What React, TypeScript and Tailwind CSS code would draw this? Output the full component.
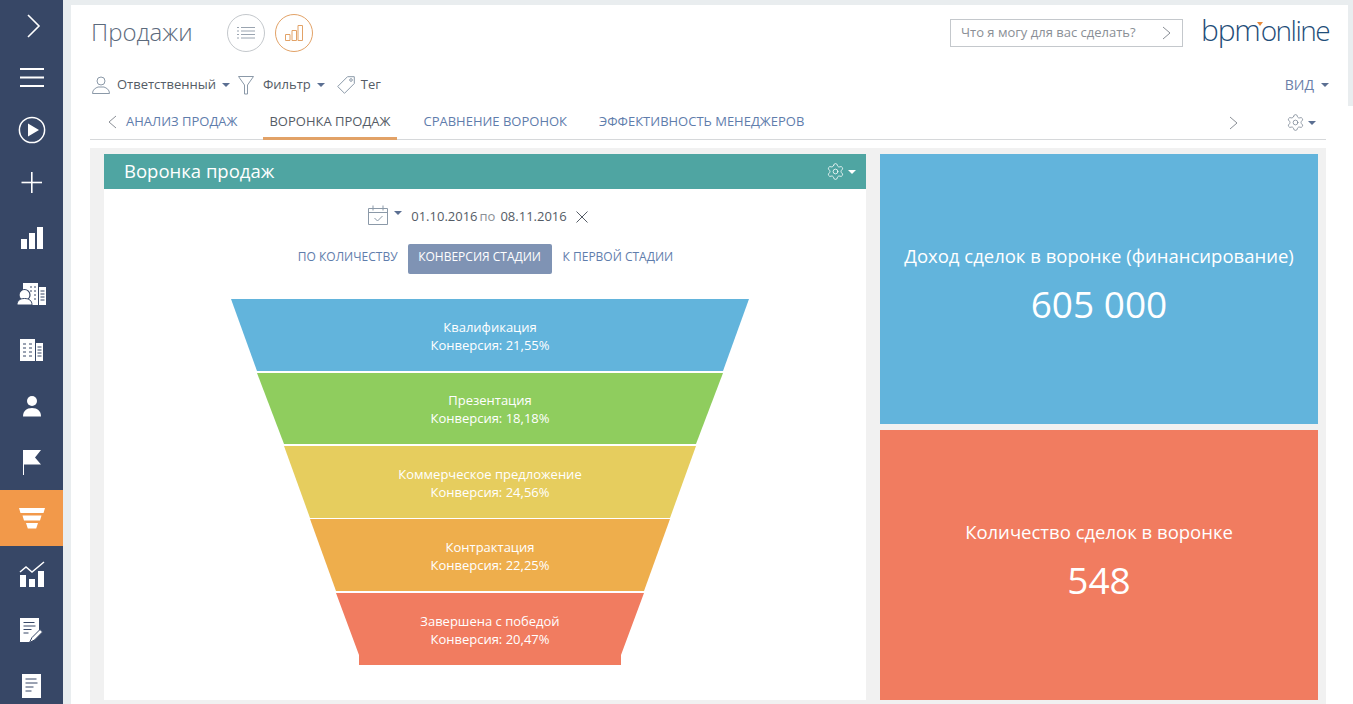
import { Settings } from 'lucide-react'

const font = { fontFamily: '"Open Sans", sans-serif' }

function Caret({ className = 'border-t-[#5b6f92]' }: { className?: string }) {
  return <span className={`inline-block w-0 h-0 border-x-[4px] border-x-transparent border-t-[4px] ${className}`} />
}

function Chevron({ dir, className }: { dir: 'left' | 'right'; className?: string }) {
  return (
    <svg width="9" height="14" viewBox="0 0 9 14" fill="none" stroke="currentColor" strokeWidth="1" className={className}>
      <path d={dir === 'right' ? 'M1 1l7 6-7 6' : 'M8 1L1 7l7 6'} />
    </svg>
  )
}

const navIcons = [
  <svg width="16" height="24" viewBox="0 0 16 24" fill="none" stroke="#fff" strokeWidth="1.6" className="ml-[5px]"><path d="M2 1l11 11L2 23" /></svg>,
  <svg width="24" height="20" viewBox="0 0 24 20" fill="#fff"><rect y="0" width="24" height="2" /><rect y="8.5" width="24" height="2" /><rect y="17" width="24" height="2" /></svg>,
  <svg width="28" height="28" viewBox="0 0 28 28"><circle cx="14" cy="14" r="12.6" fill="none" stroke="#fff" strokeWidth="1.5" /><path d="M10 7.5l11 6.5-11 6.500z" fill="#fff" /></svg>,
  <svg width="22" height="22" viewBox="0 0 22 22" fill="#fff"><rect x="10" y="0" width="1.600" height="21" /><rect x="0.500" y="9.700" width="20.500" height="1.600" /></svg>,
  <svg width="24" height="24" viewBox="0 0 24 24" fill="#fff"><rect x="1" y="13" width="6" height="10" /><rect x="9" y="7" width="6" height="16" /><rect x="17" y="1" width="6" height="22" /></svg>,
  <svg width="30" height="24" viewBox="0 0 30 24" fill="#fff">
    <path d="M6 1h15v22H6zM22 5h7v18h-7z" />
    <path d="M13 5h2M17 5h2M13 9h2M17 9h2M17 13h2M17 17h2M23.500 9h4M23.500 12h4M23.500 15h4M23.500 18h4" stroke="#374766" strokeWidth="1" />
    <circle cx="7.500" cy="13" r="5.500" fill="#fff" stroke="#374766" strokeWidth="1.200" />
    <path d="M0 23c0-4.500 3-6.500 7.500-6.500S15 18.500 15 23z" fill="#fff" stroke="#374766" strokeWidth="1" />
  </svg>,
  <svg width="24" height="23" viewBox="0 0 24 23" fill="#fff">
    <path d="M0 0h15v22H0zM16 4h7v18h-7z" />
    <path d="M3 5h3M9 5h3M3 9h3M9 9h3M3 13h3M9 13h3M3 17h3M9 17h3M17.500 8h4M17.500 11h4M17.500 14h4M17.500 17h4" stroke="#374766" strokeWidth="1" />
  </svg>,
  <svg width="20" height="21" viewBox="0 0 20 21" fill="#fff"><circle cx="10" cy="5" r="5" /><path d="M1 20.500c0-5.500 3.500-8.500 9-8.500s9 3 9 8.500z" /></svg>,
  <svg width="20" height="26" viewBox="0 0 20 26" fill="#fff"><rect x="1" y="1" width="1" height="25" /><path d="M1 1h18l-6 7.500 6 7H1z" /></svg>,
  <svg width="26" height="21" viewBox="0 0 26 21" fill="#fff"><path d="M0 0h26l-1.500 5H1.500zM3.500 7.500h19l-1.500 5H5zM7 15h12l-1.800 5.500H8.800z" /></svg>,
  <svg width="26" height="27" viewBox="0 0 26 27" fill="#fff">
    <rect x="1" y="14" width="6" height="12" /><rect x="10" y="18" width="6" height="8" /><rect x="19" y="10" width="6" height="16" />
    <path d="M1 11l6-5 6 5L25 1" fill="none" stroke="#fff" strokeWidth="1.500" />
  </svg>,
  <svg width="23" height="25" viewBox="0 0 23 25" fill="#fff">
    <path d="M0 0h19v14l-7 7-1 3H0z" />
    <path d="M3.500 4.500h11M3.500 8h12M3.500 11.500h8M3.500 15h5" stroke="#374766" strokeWidth="1" />
    <path d="M9.500 24.500l2.500-5 8-8 2.500 2.500-8 8z" stroke="#374766" strokeWidth="1" />
  </svg>,
  <svg width="19" height="24" viewBox="0 0 19 24" fill="#fff">
    <path d="M0 0h19v24H0z" />
    <path d="M3.500 5h11M3.500 9h12M3.500 13h8M3.500 17h6" stroke="#374766" strokeWidth="1" />
  </svg>,
]

const segments = [
  { points: '0,1 518,1 492,73 26,73', fill: '#62b4dc', name: 'Квалификация', conv: 'Конверсия: 21,55%', y: 34 },
  { points: '26,75 492,75 465,146 53,146', fill: '#8fcd5e', name: 'Презентация', conv: 'Конверсия: 18,18%', y: 107 },
  { points: '53,148 465,148 439,220 79,220', fill: '#e6cd5e', name: 'Коммерческое предложение', conv: 'Конверсия: 24,56%', y: 181 },
  { points: '79,221 439,221 413,293 105,293', fill: '#eeae4c', name: 'Контрактация', conv: 'Конверсия: 22,25%', y: 254 },
  { points: '105,295 413,295 390,357 390,367 128,367 128,357', fill: '#f17c60', name: 'Завершена с победой', conv: 'Конверсия: 20,47%', y: 328 },
]

export default function App() {
  return (
    <div className="w-[1353px] h-[704px] overflow-hidden flex bg-[#e9edef] text-[13px]" style={font}>
      <nav className="w-[63px] shrink-0 bg-[#374766] flex flex-col">
        {navIcons.map((icon, i) => (
          <div
            key={i}
            className={`${i < 3 ? 'h-[52px]' : i === 3 ? 'h-[54px]' : 'h-[56px]'} shrink-0 flex items-center justify-center ${i === 9 ? 'bg-[#f2994a]' : ''}`}
          >
            {icon}
          </div>
        ))}
      </nav>

      <div className="flex-1 min-w-0 ml-[8px] pt-[5px] flex flex-col">
        <header className="h-[101px] mr-[5px] bg-white pl-[20px] pr-[18px] flex flex-col">
          <div className="h-[56px] shrink-0 flex items-center">
            <h1 className="text-[24px] font-light text-[#5c6a7c] w-[136px] pb-[2px]">Продажи</h1>
            <button className="w-[38px] h-[38px] rounded-full border border-[#c4c8cc] flex items-center justify-center">
              <svg width="18" height="14" viewBox="0 0 18 14" fill="none" stroke="#9aa4b0"><path d="M0 1.500h2M4 1.500h14M0 5h2M4 5h14M0 8.500h2M4 8.500h14M0 12h2M4 12h14" /></svg>
            </button>
            <button className="ml-[10px] w-[38px] h-[38px] rounded-full border border-[#e2a267] flex items-center justify-center">
              <svg width="18" height="16" viewBox="0 0 18 16" fill="none" stroke="#e2a267"><path d="M.5 9.500h4.500v6H.5zM7 5.500h4.500v10H7zM13 .5h4.500v15H13z" /></svg>
            </button>
            <div className="ml-auto w-[233px] h-[28px] border border-[#c4c8cc] flex items-center justify-between pl-[10px] pr-[11px] text-[#8a8f96] text-[13px] mr-[18px]">
              <span>Что я могу для вас сделать?</span>
              <Chevron dir="right" className="text-[#8a8f96]" />
            </div>
            <div className="relative w-[129px] mb-[6px] text-[30px] leading-none font-light text-[#1f4e79] tracking-[-1.200px] whitespace-nowrap">
              bpm<span className="ml-[1px] text-[28px] tracking-[-1.500px]">online</span>
              <span className="absolute left-[56px] top-[7px] w-0 h-0 border-x-[3px] border-x-transparent border-t-[4px] border-t-[#e8893a]" />
            </div>
          </div>
          <div className="flex-1 pt-[3px] flex items-center text-[#555c66]">
            <svg width="18" height="18" viewBox="0 0 18 18" fill="none" stroke="#8b99a8" className="mr-[7px] ml-[1px]"><circle cx="9" cy="5" r="4" /><path d="M.5 17.500c0-4 3-5.500 5.500-6.500h6c2.500 1 5.500 2.500 5.500 6.500z" /></svg>
            <span>Ответственный</span>
            <Caret className="border-t-[#5b6f92] ml-[6px]" />
            <svg width="16" height="19" viewBox="0 0 16 19" fill="none" stroke="#8b99a8" className="ml-[8px] mr-[9px]"><path d="M.5.500h15L9.500 9v9h-3V9z" /></svg>
            <span>Фильтр</span>
            <Caret className="border-t-[#5b6f92] ml-[6px]" />
            <svg width="18" height="18" viewBox="0 0 18 18" fill="none" stroke="#8b99a8" className="ml-[12px] mr-[6px]"><path d="M.7 10.500L10.500.7h6.800v6.800L7.500 17.300z" /><circle cx="14" cy="4" r="1.300" /></svg>
            <span>Тег</span>
            <span className="ml-auto text-[#6b80a8] text-[14px] mr-[7px] pb-[2px]">ВИД</span>
            <Caret className="border-t-[#5b6f92] mr-[1px]" />
          </div>
        </header>

        <main className="flex-1 min-h-0 bg-white pl-[19px] pr-[27px] flex flex-col">
          <div className="h-[34px] shrink-0 border-b border-[#d6d8da] flex items-stretch relative">
            <div className="flex items-center pl-[18px] pb-[2px] text-[#8a8f96]"><Chevron dir="left" /></div>
            <div className="flex items-center pl-[9px] pb-[2px] text-[#5f7dac]">АНАЛИЗ ПРОДАЖ</div>
            <div className="ml-[26px] pl-[6px] pr-[7px] flex items-center text-[#555c66] border-b-[3px] border-[#e2a267] -mb-px pt-[1px]">ВОРОНКА ПРОДАЖ</div>
            <div className="ml-[26px] flex items-center pb-[2px] text-[#5f7dac]">СРАВНЕНИЕ ВОРОНОК</div>
            <div className="ml-[32px] flex items-center pb-[2px] text-[#5f7dac]">ЭФФЕКТИВНОСТЬ МЕНЕДЖЕРОВ</div>
            <div className="ml-auto flex items-center text-[#8a8f96] mr-[48px]"><Chevron dir="right" /></div>
            <div className="flex items-center gap-[3px] mr-[10px]">
              <Settings size={19} strokeWidth={1} className="text-[#7b8794]" />
              <Caret className="border-t-[#5b6f92]" />
            </div>
          </div>

          <div className="flex-1 min-h-0 mt-[8px] bg-[#f1f1f1] pl-[14px] pr-[8px] pt-[6px] pb-[4px] flex gap-[14px]">
            <section className="w-[762px] shrink-0 bg-white flex flex-col">
              <div className="h-[35px] bg-[#4fa5a2] flex items-center pl-[20px] pr-[10px] text-white text-[18.500px]">
                <span className="pb-[2px]">Воронка продаж</span>
                <Settings size={19} strokeWidth={1} className="ml-auto mr-[3px] text-white" />
                <Caret className="border-t-white" />
              </div>
              <div className="h-[55px] flex items-center justify-center text-[#555c66] text-[13px] pt-[1px] pr-[14px]">
                <svg width="20" height="20" viewBox="0 0 20 20" fill="none" stroke="#8b99a8" className="-mt-[4px]"><path d="M.5 3.500h19v16H.5zM.5 7.500h19M5 .5v5M15 .5v5M6.500 13l3 3 5-5" /></svg>
                <Caret className="border-t-[#5b6f92] ml-[6px] mb-[8px]" />
                <span className="ml-[9px]">01.10.2016</span>
                <span className="ml-[2px] text-[#8a8f96]">по</span>
                <span className="ml-[5px]">08.11.2016</span>
                <svg width="12" height="12" viewBox="0 0 12 12" stroke="#555c66" className="ml-[9px]"><path d="M.5.500l11 11M11.500.500l-11 11" /></svg>
              </div>
              <div className="h-[30px] flex items-center justify-center text-[12px] text-[#5f7dac] pl-[1px]">
                <span className="pb-[5px]">ПО КОЛИЧЕСТВУ</span>
                <span className="ml-[10px] h-[30px] w-[144px] pb-[5px] flex items-center justify-center rounded-[2px] bg-[#7f93b4] text-white">КОНВЕРСИЯ СТАДИИ</span>
                <span className="ml-[11px] pb-[5px]">К ПЕРВОЙ СТАДИИ</span>
              </div>
              <svg width="518" height="368" viewBox="0 0 518 368" className="mt-[24px] ml-[127px] shrink-0">
                {segments.map((s) => (
                  <g key={s.name}>
                    <polygon points={s.points} fill={s.fill} />
                    <text x="259" y={s.y} textAnchor="middle" fill="#fff" fontSize="13">{s.name}</text>
                    <text x="259" y={s.y + 18} textAnchor="middle" fill="#fff" fontSize="13">{s.conv}</text>
                  </g>
                ))}
              </svg>
            </section>

            <div className="flex-1 min-w-0 flex flex-col gap-[6px] text-white">
              <div className="flex-1 bg-[#62b4dc] flex flex-col items-center justify-center pb-[5px]">
                <div className="text-[18.500px]">Доход сделок в воронке (финансирование)</div>
                <div className="text-[37px] mt-[6px]">605 000</div>
              </div>
              <div className="flex-1 bg-[#f17c60] flex flex-col items-center justify-center pb-[5px]">
                <div className="text-[18.500px]">Количество сделок в воронке</div>
                <div className="text-[37px] mt-[6px]">548</div>
              </div>
            </div>
          </div>
        </main>
      </div>
    </div>
  )
}
